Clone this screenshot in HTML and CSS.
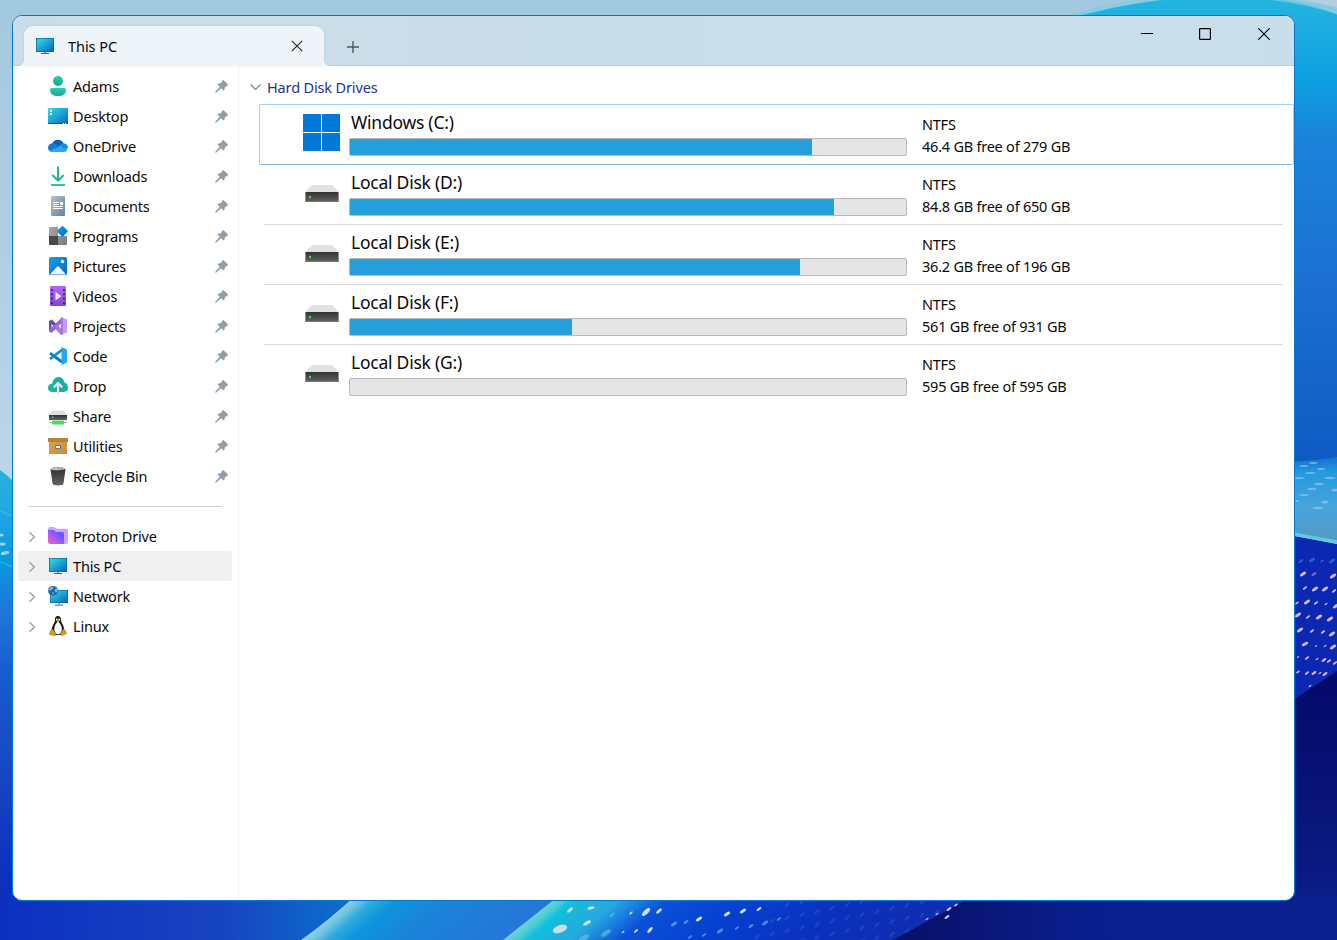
FILE: index.html
```html
<!DOCTYPE html>
<html lang="en">
<head>
<meta charset="utf-8">
<title>This PC</title>
<link rel="stylesheet" href="styles.css">
</head>
<body>
<svg class="wallpaper" viewBox="0 0 1337 940" aria-hidden="true">
  <defs>
    <linearGradient id="sky" x1="0" y1="0" x2="0" y2="1"><stop offset="0" stop-color="#a2c8df"/><stop offset=".5" stop-color="#bad6e8"/></linearGradient>
    <linearGradient id="leftWave" gradientUnits="userSpaceOnUse" x1="0" y1="468" x2="0" y2="940"><stop offset="0" stop-color="#25b4df"/><stop offset=".09" stop-color="#24a6e4"/><stop offset=".19" stop-color="#079be0"/><stop offset=".3" stop-color="#1e78da"/><stop offset=".43" stop-color="#165dd0"/><stop offset=".65" stop-color="#1647c3"/><stop offset=".85" stop-color="#0b32bf"/><stop offset="1" stop-color="#0b2fbd"/></linearGradient>
    <linearGradient id="rightArc" gradientUnits="userSpaceOnUse" x1="0" y1="0" x2="0" y2="460"><stop offset="0" stop-color="#24b4df"/><stop offset=".17" stop-color="#0ea1e2"/><stop offset=".3" stop-color="#1b83da"/><stop offset=".65" stop-color="#1b6ed1"/><stop offset="1" stop-color="#0d5bc3"/></linearGradient>
    <linearGradient id="rightWave" x1="0" y1="0" x2="0" y2="1"><stop offset="0" stop-color="#166ed2"/><stop offset=".18" stop-color="#239be0"/><stop offset=".6" stop-color="#49a4db"/><stop offset="1" stop-color="#5399c5"/></linearGradient>
    <linearGradient id="bottomLeft" gradientUnits="userSpaceOnUse" x1="0" y1="0" x2="350" y2="0"><stop offset="0" stop-color="#0b30c0"/><stop offset=".65" stop-color="#1745c1"/><stop offset="1" stop-color="#0a70cc"/></linearGradient>
    <linearGradient id="bottomMid" gradientUnits="userSpaceOnUse" x1="325" y1="920" x2="410" y2="1019"><stop offset="0" stop-color="#8ed2e3"/><stop offset=".06" stop-color="#6fc5e0"/><stop offset=".13" stop-color="#2eabdc"/><stop offset=".24" stop-color="#0d95dd"/><stop offset=".5" stop-color="#1b83da"/><stop offset="1" stop-color="#2477d7"/></linearGradient>
    <linearGradient id="bottomDots" gradientUnits="userSpaceOnUse" x1="528" y1="920" x2="697" y2="1118"><stop offset="0" stop-color="#6fd0d8"/><stop offset=".03" stop-color="#45cfd6"/><stop offset=".055" stop-color="#12c0dc"/><stop offset=".17" stop-color="#26a6e0"/><stop offset=".29" stop-color="#0b50d8"/><stop offset=".5" stop-color="#063fd0"/><stop offset=".75" stop-color="#0a31bd"/><stop offset="1" stop-color="#102cb2"/></linearGradient>
    <linearGradient id="bottomDark" gradientUnits="userSpaceOnUse" x1="920" y1="0" x2="1337" y2="0"><stop offset="0" stop-color="#08116d"/><stop offset=".4" stop-color="#0a1f8d"/><stop offset="1" stop-color="#0b208f"/></linearGradient>
    <linearGradient id="rightDark" gradientUnits="userSpaceOnUse" x1="0" y1="680" x2="0" y2="940"><stop offset="0" stop-color="#05096a"/><stop offset=".5" stop-color="#081578"/><stop offset="1" stop-color="#0b208f"/></linearGradient>
    <ellipse id="d" rx="3.6" ry="1.5"/>
    <pattern id="faint" width="15" height="13" patternUnits="userSpaceOnUse" patternTransform="skewY(-12)"><ellipse cx="7" cy="6" rx="3" ry="1.200" fill="#3f8be0" opacity=".25" transform="rotate(-38 7 6)"/></pattern>
  </defs>
  <path fill="url(#sky)" d="M0 0h1337v940H0z"/>
  <path fill="url(#leftWave)" d="M0 470q7 5 14 12v458H0z"/>
  <path d="M0 511q7 3 14 6M0 562q7 2 14 6" fill="none" stroke="#48c7dc" stroke-width="1.5" opacity=".5"/>
  <g fill="#b9e4ee" opacity=".8"><use href="#d" x="0" y="535"/><use href="#d" x="2" y="544"/><use href="#d" transform="translate(5 553)rotate(-12)scale(1.200)"/></g>
  <path fill="url(#rightArc)" d="M1060 20Q1150-4 1220-5Q1290-5 1337 14V480H1290V30z"/>
  <path d="M1058 20Q1130-2 1200-5" fill="none" stroke="#7ecfdd" stroke-width="4" opacity=".75"/>
  <path d="M1262-4Q1305 0 1342 13" fill="none" stroke="#7ecfdd" stroke-width="6" opacity=".7"/>
  <path fill="#b4cfe0" d="M1285-1Q1315 1 1338 8V-1z"/>
  <path fill="url(#rightWave)" d="M1290 462q24-1 47-5v86l-47-9z"/>
  <path fill="#0c27b1" d="M1290 535l47 9v146l-47 20z"/>
  <path d="M1290 533.500l47 8.500" stroke="#5ccbdd" stroke-width="3.500"/>
  <path fill="url(#rightDark)" d="M1290 702l47-31v269h-47z"/>
  <path fill="url(#bottomLeft)" d="M0 895h380v45H0z"/>
  <path fill="url(#bottomMid)" d="M356 895q-28 26-55 45h270v-45z"/>
  <path fill="url(#bottomDots)" d="M560 895l-57 45h420l60-45z"/>
  <path fill="url(#faint)" d="M780 901h175l-60 39H750z"/>
  <path fill="url(#bottomDark)" d="M975 895l-82 45h444v-45z"/>
  <g fill="#9dc8e8" opacity=".65">
    <use href="#d" transform="translate(1304 466)scale(1.200 .7)"/><use href="#d" transform="translate(1313 463)scale(1.200 .6)"/><use href="#d" transform="translate(1310 473)scale(1.400 .7)"/><use href="#d" transform="translate(1299 478)scale(1.500 .7)"/><use href="#d" transform="translate(1321 469)scale(1.200 .7)"/><use href="#d" transform="translate(1330 478)scale(1.700 .8)"/><use href="#d" transform="translate(1319 484)scale(1.300 .8)"/><use href="#d" transform="translate(1312 489)scale(1.200 .8)"/><use href="#d" transform="translate(1304 495)scale(1.300 .7)"/><use href="#d" x="1335" y="490"/><use href="#d" x="1325" y="502"/><use href="#d" transform="translate(1318 508)scale(1.400 .8)"/><use href="#d" transform="translate(1297 501)scale(.6)"/>
  </g>
  <g fill="#d5b5d8">
    <use href="#d" transform="translate(1303 574)rotate(-35)"/><use href="#d" opacity=".5" transform="translate(1314 574)rotate(-35)scale(.8)"/><use href="#d" transform="translate(1333 576)rotate(-35)"/>
    <use href="#d" transform="translate(1305 588)rotate(-35)scale(.7)"/><use href="#d" transform="translate(1315 589)rotate(-35)"/><use href="#d" transform="translate(1325 589)rotate(-35)"/><use href="#d" transform="translate(1334 591)rotate(-35)scale(.7)"/>
    <use href="#d" transform="translate(1297 603)rotate(-35)scale(.6)"/><use href="#d" transform="translate(1307 602)rotate(-35)"/><use href="#d" transform="translate(1316 603)rotate(-35)scale(.7)"/><use href="#d" transform="translate(1326 604)rotate(-35)scale(.5)"/><use href="#d" transform="translate(1336 606)rotate(-35)"/>
    <use href="#d" transform="translate(1298 615)rotate(-35)"/><use href="#d" transform="translate(1308 617)rotate(-35)scale(.7)"/><use href="#d" transform="translate(1319 617)rotate(-35)"/><use href="#d" transform="translate(1330 619)rotate(-35)"/>
    <use href="#d" transform="translate(1300 630)rotate(-35)"/><use href="#d" transform="translate(1312 631)rotate(-35)scale(.7)"/><use href="#d" transform="translate(1323 632)rotate(-35)scale(.7)"/><use href="#d" transform="translate(1332 634)rotate(-35)"/>
    <use href="#d" transform="translate(1305 644)rotate(-30)"/><use href="#d" transform="translate(1316 646)rotate(-35)scale(.4)"/><use href="#d" transform="translate(1325 646)rotate(-35)scale(.5)"/><use href="#d" transform="translate(1333 647)rotate(-35)"/>
    <use href="#d" transform="translate(1298 657)rotate(-35)scale(.4)"/><use href="#d" transform="translate(1307 658)rotate(-35)scale(.7)"/><use href="#d" transform="translate(1317 659)rotate(-35)scale(.5)"/><use href="#d" transform="translate(1324 660)rotate(-35)scale(.8)"/><use href="#d" transform="translate(1329 661)rotate(-35)scale(.7)"/><use href="#d" transform="translate(1335 663)rotate(-35)scale(.7)"/>
    <use href="#d" transform="translate(1298 672)rotate(-35)scale(.6)"/><use href="#d" transform="translate(1307 673)rotate(-35)scale(.7)"/><use href="#d" transform="translate(1314 673)rotate(-35)scale(.8)"/><use href="#d" transform="translate(1320 673)rotate(-35)scale(.5)"/><use href="#d" transform="translate(1325 674)rotate(-35)scale(.8)"/><use href="#d" transform="translate(1310 686)rotate(-35)scale(.5)"/>
  </g>
  <g fill="#2e78d0" opacity=".7"><use href="#d" transform="translate(1301 561)rotate(-35)scale(.8)"/><use href="#d" transform="translate(1312 560)rotate(-35)"/><use href="#d" transform="translate(1322 561)rotate(-35)scale(.6)"/><use href="#d" transform="translate(1332 561)rotate(-35)"/></g>
  <g fill="#c5e0e6">
    <ellipse cx="560" cy="929" rx="7.500" ry="3.800" transform="rotate(-20 560 929)"/><ellipse cx="555" cy="946" rx="6" ry="3"/><use href="#d" transform="translate(570 910)rotate(-45)"/><use href="#d" transform="translate(587 923)rotate(-30)scale(1.200)"/><use href="#d" transform="translate(591 908)rotate(-10)"/>
    <use href="#d" transform="translate(646 912)rotate(-45)scale(1.500)"/><use href="#d" transform="translate(659 911)rotate(-45)"/><use href="#d" transform="translate(631 913)rotate(-40)scale(.6)"/><use href="#d" transform="translate(650 930)rotate(-50)"/><use href="#d" transform="translate(636 931)rotate(-40)scale(.7)"/><use href="#d" transform="translate(623 932)rotate(-40)scale(.5)"/>
    <use href="#d" transform="translate(699 919)rotate(-35)"/><use href="#d" transform="translate(727 914)rotate(-35)"/><use href="#d" transform="translate(743 911)rotate(-35)"/><use href="#d" transform="translate(759 909)rotate(-35)scale(.8)"/>
  </g>
  <g fill="#5fc3e4" opacity=".65">
    <use href="#d" transform="translate(584 938)rotate(-30)scale(1.700)"/><use href="#d" transform="translate(606 933)rotate(-35)scale(1.600)"/><use href="#d" transform="translate(612 915)rotate(-40)scale(.8)"/><use href="#d" transform="translate(674 924)rotate(-35)"/><use href="#d" transform="translate(686 922)rotate(-35)scale(.8)"/><use href="#d" transform="translate(720 931)rotate(-35)"/><use href="#d" transform="translate(704 935)rotate(-35)scale(.7)"/><use href="#d" transform="translate(690 937)rotate(-35)scale(.7)"/><use href="#d" transform="translate(737 928)rotate(-35)scale(.7)"/><use href="#d" transform="translate(751 926)rotate(-35)scale(.8)"/><use href="#d" transform="translate(765 923)rotate(-35)"/><use href="#d" transform="translate(779 919)rotate(-35)scale(.7)"/>
  </g>
  <g fill="#c9c6ee"><use href="#d" transform="translate(949 909)rotate(-35)scale(.8)"/><use href="#d" transform="translate(956 905)rotate(-35)scale(.6)"/><use href="#d" transform="translate(947 917)rotate(-35)scale(.8)"/><use href="#d" transform="translate(937 914)rotate(-35)scale(.5)"/><use href="#d" transform="translate(927 919)rotate(-35)scale(.5)"/></g>
</svg>

<svg class="sprite" aria-hidden="true">
  <defs>
    <linearGradient id="gGreen" x1="0" y1="0" x2="0" y2="1"><stop offset="0" stop-color="#2bcdb3"/><stop offset="1" stop-color="#12a893"/></linearGradient>
    <linearGradient id="gScreen" x1="0" y1="0" x2="1" y2="1"><stop offset="0" stop-color="#33dce4"/><stop offset=".5" stop-color="#1ba3d6"/><stop offset="1" stop-color="#0d63bd"/></linearGradient>
    <linearGradient id="gBlue" x1="0" y1="0" x2="1" y2="1"><stop offset="0" stop-color="#15a0ea"/><stop offset="1" stop-color="#0868bd"/></linearGradient>
    <linearGradient id="gDoc" x1="0" y1="0" x2="1" y2="1"><stop offset="0" stop-color="#afc3d6"/><stop offset="1" stop-color="#66809b"/></linearGradient>
    <linearGradient id="gVid" x1="0" y1="0" x2="0" y2="1"><stop offset="0" stop-color="#b567f1"/><stop offset="1" stop-color="#8443dd"/></linearGradient>
    <linearGradient id="gGrey" x1="0" y1="0" x2="1" y2="1"><stop offset="0" stop-color="#a7a7a9"/><stop offset="1" stop-color="#7b7b7e"/></linearGradient>
    <linearGradient id="gDark" x1="0" y1="0" x2="0" y2="1"><stop offset="0" stop-color="#343434"/><stop offset="1" stop-color="#626262"/></linearGradient>
    <linearGradient id="gFolder" x1="1" y1="0" x2="0" y2="1"><stop offset=".3" stop-color="#7055ff"/><stop offset=".6" stop-color="#a75bf2"/><stop offset="1" stop-color="#ff62c0"/></linearGradient>
    <linearGradient id="gBox" x1="0" y1="0" x2="1" y2="1"><stop offset="0" stop-color="#d6a254"/><stop offset="1" stop-color="#c58e40"/></linearGradient>
  </defs>
  <symbol id="user" viewBox="0 0 20 20"><circle cx="10" cy="5" r="5" fill="url(#gGreen)"/><path fill="url(#gGreen)" d="M4 12h12q2 0 2 2c0 4-3.500 6-8 6s-8-2-8-6q0-2 2-2z"/></symbol>
  <symbol id="desktop" viewBox="0 0 20 20"><rect y="2" width="20" height="16" rx="1" fill="url(#gScreen)"/><path fill="#07599c" d="M0 17h20q0 1-1 1H1q-1 0-1-1z"/><path fill="#fff" d="M2 4h2v2H2zM2 7h2v2H2zM15 17h1v1h-1zM17 17h1v1h-1z"/></symbol>
  <symbol id="onedrive" viewBox="0 0 20 20"><path fill="#0862b8" d="M4 8a6.200 6.200 0 0 1 11.500-.5L9 12z"/><path fill="#0f7bd8" d="M4.500 7.200C1.500 7.500 0 9.500 0 11.800S2 16 4 16l8-5-5-3.200q-1-.6-2.500-.6z"/><path fill="#1688e0" d="M15.500 7.200c2.800.3 4.500 2 4.500 4.600l-3 3-5-4q1-3.500 3.500-3.600z"/><path fill="#2ba7ef" d="M1.800 14.800L12 10.200l7.400 3.600Q18.500 16 16 16H4.500Q2.800 16 1.800 14.800z"/></symbol>
  <symbol id="download" viewBox="0 0 20 20"><g fill="none" stroke="#1fb597" stroke-width="2"><path d="M10 .5v14M4.300 9l5.700 5.500L15.700 9"/><path stroke="#35c39a" stroke-width="1.800" d="M3 19h14"/></g></symbol>
  <symbol id="document" viewBox="0 0 20 20"><rect x="3" width="14" height="20" rx="1" fill="url(#gDoc)"/><path fill="#fff" d="M5 6h6v1H5zM12 6h3v3h-3zM5 8h6v1H5zM5 10h10v1H5zM5 12h10v1H5z"/></symbol>
  <symbol id="programs" viewBox="0 0 20 20"><path fill="url(#gGrey)" d="M1 2q0-1 1-1h8v9H1zM10 10h9v8q0 1-1 1h-8z"/><path fill="#47484b" d="M1 10h9v9H2q-1 0-1-1z"/><path fill="url(#gBlue)" d="M14.500 0q.7 0 1 .4l4 4.200q.5.600 0 1.200l-4.200 4.400q-.8.700-1.600 0L9.300 5.800q-.4-.6 0-1.200L13.500.4q.4-.4 1-.4z"/></symbol>
  <symbol id="picture" viewBox="0 0 20 20"><rect x="1" y="1" width="18" height="18" rx="1.500" fill="url(#gBlue)"/><path fill="#eef7ff" d="M2 18.500l7-7.700q1-.9 2 0l7 7.700z"/><circle cx="14.500" cy="5.500" r="1.700" fill="#fff"/></symbol>
  <symbol id="video" viewBox="0 0 20 20"><rect x="2" width="16" height="20" rx="1" fill="url(#gVid)"/><path fill="none" stroke="#482079" stroke-width="1.800" stroke-dasharray="2 2.300" d="M4 3v16M16 3v16"/><path fill="#f0e6fc" d="M7.500 6v8.500L13.500 10.200z"/></symbol>
  <symbol id="vs" viewBox="0 0 20 20"><path fill="#6c4aaa" d="M1 5l2.500-1.500L6 5.500 14 14l-1.500 2L5 9.500 3.500 8v5L1 15.500z"/><path fill="#9067d2" d="M1 15.500L3.500 17 14 7.500V1.500L7 8l-5 5z"/><path fill="#c79af5" d="M13 1l6 2.500v13L13 19z"/><path fill="#ad73e4" d="M13 1l2 1v16l-2 1L6.500 12l2-3 4.500 4.500z"/><path fill="#e9d9f9" d="M13 7.500v5L10 10z"/></symbol>
  <symbol id="code" viewBox="0 0 20 20"><path fill="none" stroke="#087abd" stroke-width="2.800" stroke-linejoin="round" d="M2 7.200L14 16"/><path fill="none" stroke="#0a90d5" stroke-width="2.800" d="M2 13L14.500 3.500"/><path fill="#22a6ed" d="M13.500 1l5 2.200q.5.300.5 1v11.600q0 .8-.5 1L13.500 19z"/></symbol>
  <symbol id="drop" viewBox="0 0 20 20"><path fill="#16b39f" d="M4.500 16q-4.500-.3-4.500-4 0-3.700 4-4.200Q5.500 1 10.500 1q4.500 0 6 5.500Q20 7.500 20 11.500q0 4.200-4.200 4.500z"/><path fill="#e2e2e7" d="M10 5.500l5 5-1.500 1.700-2.400-2.200v8.500H8.900V10l-2.400 2.200L5 10.500z"/></symbol>
  <symbol id="share" viewBox="0 0 20 20"><path fill="#dedfe3" d="M4 4.500h12l3 4.500H1z"/><path fill="url(#gDark)" d="M1 9h18v5H1z"/><path fill="#3be35a" d="M4 10.500h1.500V12H4z"/><path fill="#4bdc62" d="M4 14.500h12v4H4z"/><path fill="#b5b8b7" d="M1 16h3v1H1zM16 16h3v1h-3z"/></symbol>
  <symbol id="box" viewBox="0 0 20 20"><path fill="url(#gBox)" d="M1 5h18v13H1z"/><path fill="#bd8131" d="M0 2h20v4H0z"/><path fill="#fff" stroke="#6f7482" d="M7.500 9.500h5v3h-5z"/></symbol>
  <symbol id="bin" viewBox="0 0 20 20"><path fill="url(#gDark)" d="M2.500 3h15l-2 14.500q-.3 1.300-1.600 1.500-3.900.8-7.800 0-1.300-.2-1.600-1.500z"/><path fill="#c3c6c7" d="M3 2l4-1.500 4 .5 5 .2 1.500 1.800q-7 2.500-15 .4z"/><path fill="#6e8984" d="M5 1.500l2 .8-1 1zM10 1l2 1.500h-3z"/><path fill="#b96b66" d="M12.500 1.800h1.500v1.500h-1.500z"/></symbol>
  <symbol id="folder" viewBox="0 0 20 20"><path fill="#c9a4ff" d="M0 3q0-2 2-2h4l2.500 1.800H18q2 0 2 2V16q0 2-2 2H2z"/><path fill="url(#gFolder)" d="M0 4h5.500L8 6h6.500q1.500 0 1.500 1.500V18H2q-2 0-2-2z"/></symbol>
  <symbol id="pc" viewBox="0 0 20 20"><path fill="#0a6b94" d="M1 2h18v14H1z"/><path fill="url(#gScreen)" d="M1.700 2.700h16.600v12.600H1.700z"/><path fill="#9aa3aa" d="M9 16h2v1.200H9z"/><path fill="#53626e" d="M6 17h8v1H6z"/></symbol>
  <symbol id="network" viewBox="0 0 20 20"><path fill="#0a6b94" d="M2 4h18v13H2z"/><path fill="url(#gScreen)" d="M2.700 4.700h16.600v11.600H2.700z"/><path fill="#9aa3aa" d="M10 17h2v1.500h-2z"/><path fill="#53626e" d="M7 18.700h8v1H7z"/><circle cx="5" cy="4.800" r="4.900" fill="#1b67af"/><path fill="#7fbde5" d="M3 1l2.500-.6L4.500 3l-2 1.500L.6 4zM6.500 4l2-2 1 3-1.500 2zM4 6l2 1-1 2z"/></symbol>
  <symbol id="tux" viewBox="0 0 20 20"><path fill="#1b1b1b" d="M10 0c-2.200 0-3.200 1.500-3 4 .1 2-.8 2.800-2 5-1.500 3-2.300 8 1 10h8c3-2 2.300-7 1-10-1-2-2-3-2-5 0-2.500-1-4-3-4z"/><path fill="#fff" d="M10 5.500C8 7 6.300 10 6.300 13c0 3 1.700 5.300 3.700 5.300s3.900-2.300 3.900-5.300c0-3-1.900-6-3.900-7.500z"/><circle cx="8.700" cy="3.400" r=".9" fill="#fff"/><circle cx="11.300" cy="3.400" r=".9" fill="#fff"/><path fill="#e2ab20" d="M8 4.800l2-1 2 1-2 1.600z"/><path fill="#d79c18" stroke="#9e7213" stroke-width=".5" d="M4.300 13l3.500 4.500q.5 2-1.500 2.300L1.500 18.500l.5-3zM15.700 13l-3.200 4.500q-.4 2 1.500 2.300l4.500-2.300-1-3z"/></symbol>
  <symbol id="pin" viewBox="0 0 14 14"><path fill="#929ea7" stroke="#929ea7" stroke-width=".5" d="M8.300.5q.6-.4 1.100 0l4.200 4.200q.5.600-.1 1.100l-2.700 1.500-1 3.200q-.3.700-.9.200L6.600 8.500 1.800 13 .5 13.500 1 12.100 5.400 7.300 3.200 5.200q-.5-.6.200-.9l3.300-1z"/></symbol>
  <symbol id="chev" viewBox="0 0 10 12"><path fill="none" stroke="#a4a4a4" stroke-width="1.500" d="M2.500 2.300L7.300 7 2.500 11.700"/></symbol>
  <symbol id="disk" viewBox="0 0 34 18"><path fill="#e1e1e5" d="M7 0h20l7 7H0z"/><path fill="url(#gDark)" d="M0 7h34v10H0z"/><path fill="#8e9091" d="M0 7h1v10H0zM33 7h1v10h-1zM0 16.500h34v.5H0z"/><circle cx="5" cy="12" r="1.200" fill="#32eb3a"/></symbol>
</svg>

<main class="window">
  <header class="titlebar">
    <div class="tab">
      <svg class="ico"><use href="#pc"/></svg>
      <span class="tab-title">This PC</span>
      <svg class="tab-close" viewBox="0 0 12 12"><path d="M.8.800l10.400 10.400M11.200.800L.8 11.200"/></svg>
    </div>
    <svg class="new-tab" viewBox="0 0 12 12"><path d="M6 0v12M0 6h12"/></svg>
    <div class="controls">
      <svg viewBox="0 0 12 12"><path d="M0 5.500h12"/></svg>
      <svg viewBox="0 0 12 12"><rect x=".6" y=".6" width="10.800" height="10.800" rx=".6"/></svg>
      <svg viewBox="0 0 12 12"><path d="M.3.300l11.400 11.400M11.700.300L.3 11.700"/></svg>
    </div>
  </header>
  <div class="body">
    <nav class="sidebar">
      <div class="item"><svg class="ico"><use href="#user"/></svg><span>Adams</span><svg class="pin"><use href="#pin"/></svg></div>
      <div class="item"><svg class="ico"><use href="#desktop"/></svg><span>Desktop</span><svg class="pin"><use href="#pin"/></svg></div>
      <div class="item"><svg class="ico"><use href="#onedrive"/></svg><span>OneDrive</span><svg class="pin"><use href="#pin"/></svg></div>
      <div class="item"><svg class="ico"><use href="#download"/></svg><span>Downloads</span><svg class="pin"><use href="#pin"/></svg></div>
      <div class="item"><svg class="ico"><use href="#document"/></svg><span>Documents</span><svg class="pin"><use href="#pin"/></svg></div>
      <div class="item"><svg class="ico"><use href="#programs"/></svg><span>Programs</span><svg class="pin"><use href="#pin"/></svg></div>
      <div class="item"><svg class="ico"><use href="#picture"/></svg><span>Pictures</span><svg class="pin"><use href="#pin"/></svg></div>
      <div class="item"><svg class="ico"><use href="#video"/></svg><span>Videos</span><svg class="pin"><use href="#pin"/></svg></div>
      <div class="item"><svg class="ico"><use href="#vs"/></svg><span>Projects</span><svg class="pin"><use href="#pin"/></svg></div>
      <div class="item"><svg class="ico"><use href="#code"/></svg><span>Code</span><svg class="pin"><use href="#pin"/></svg></div>
      <div class="item"><svg class="ico"><use href="#drop"/></svg><span>Drop</span><svg class="pin"><use href="#pin"/></svg></div>
      <div class="item"><svg class="ico"><use href="#share"/></svg><span>Share</span><svg class="pin"><use href="#pin"/></svg></div>
      <div class="item"><svg class="ico"><use href="#box"/></svg><span>Utilities</span><svg class="pin"><use href="#pin"/></svg></div>
      <div class="item"><svg class="ico"><use href="#bin"/></svg><span>Recycle Bin</span><svg class="pin"><use href="#pin"/></svg></div>
      <div class="divider"></div>
      <div class="item node"><svg class="chev"><use href="#chev"/></svg><svg class="ico"><use href="#folder"/></svg><span>Proton Drive</span></div>
      <div class="item node selected"><svg class="chev"><use href="#chev"/></svg><svg class="ico"><use href="#pc"/></svg><span>This PC</span></div>
      <div class="item node"><svg class="chev"><use href="#chev"/></svg><svg class="ico"><use href="#network"/></svg><span>Network</span></div>
      <div class="item node"><svg class="chev"><use href="#chev"/></svg><svg class="ico"><use href="#tux"/></svg><span>Linux</span></div>
    </nav>
    <section class="content">
      <h1 class="group"><svg viewBox="0 0 12 8"><path d="M1.500 1.500l5 5 5-5"/></svg>Hard Disk Drives</h1>
      <div class="drive focused">
        <svg class="win-logo" viewBox="0 0 37 37"><path fill="#0078d7" d="M0 0h18v18H0zM19 0h18v18H19zM0 19h18v18H0zM19 19h18v18H19z"/></svg>
        <div class="usage"><div class="name">Windows (C:)</div><div class="bar"><div class="fill" style="width:83.100%"></div></div></div>
        <div class="info"><div>NTFS</div><div>46.4 GB free of 279 GB</div></div>
      </div>
      <div class="drive">
        <svg class="disk"><use href="#disk"/></svg>
        <div class="usage"><div class="name">Local Disk (D:)</div><div class="bar"><div class="fill" style="width:87.100%"></div></div></div>
        <div class="info"><div>NTFS</div><div>84.8 GB free of 650 GB</div></div>
      </div>
      <div class="drive">
        <svg class="disk"><use href="#disk"/></svg>
        <div class="usage"><div class="name">Local Disk (E:)</div><div class="bar"><div class="fill" style="width:80.900%"></div></div></div>
        <div class="info"><div>NTFS</div><div>36.2 GB free of 196 GB</div></div>
      </div>
      <div class="drive">
        <svg class="disk"><use href="#disk"/></svg>
        <div class="usage"><div class="name">Local Disk (F:)</div><div class="bar"><div class="fill" style="width:39.900%"></div></div></div>
        <div class="info"><div>NTFS</div><div>561 GB free of 931 GB</div></div>
      </div>
      <div class="drive">
        <svg class="disk"><use href="#disk"/></svg>
        <div class="usage"><div class="name">Local Disk (G:)</div><div class="bar"></div></div>
        <div class="info"><div>NTFS</div><div>595 GB free of 595 GB</div></div>
      </div>
    </section>
  </div>
</main>
</body>
</html>
```
FILE: styles.css
```css
* { box-sizing: border-box; }
html, body { margin: 0; width: 1337px; height: 940px; overflow: hidden; }
body { padding: 15px 42px 39px 12px; font-family: "Noto Sans", "Open Sans", sans-serif; font-size: 14.500px; color: #0a0a0a; }
svg { display: block; flex: none; }
.wallpaper { position: absolute; inset: 0; width: 1337px; height: 940px; z-index: -1; }
.sprite { position: absolute; width: 0; height: 0; }

.window { width: 1283px; height: 886px; border: 1px solid #0078d4; border-radius: 10px; overflow: hidden; background: #fff; display: flex; flex-direction: column; }
.titlebar { height: 50px; flex: none; display: flex; align-items: flex-end; padding-left: 11px; background: linear-gradient(90deg, #cbdde9, #c8dfeb); box-shadow: inset 0 -1px #b9ccd8; }
.tab { position: relative; width: 300px; height: 40px; padding: 0 21px 0 11px; display: flex; align-items: center; background: #eff4f9; border-radius: 9px 9px 0 0; box-shadow: 0 0 2px #8ea7b966; }
.tab::before, .tab::after { content: ""; position: absolute; bottom: 0; width: 5px; height: 5px; }
.tab::before { left: -5px; background: radial-gradient(circle at 0 0, transparent 4.500px, #eff4f9 5px); }
.tab::after { right: -5px; background: radial-gradient(circle at 100% 0, transparent 4.500px, #eff4f9 5px); }
.tab-title { margin-left: 13px; flex: 1; letter-spacing: -.050px; }
.ico { width: 20px; height: 20px; overflow: visible; }
.tab-close { width: 12px; height: 12px; fill: none; stroke: #222; stroke-width: 1.100; }
.new-tab { width: 12px; height: 12px; margin: 0 0 13px 23px; fill: none; stroke: #555; stroke-width: 1.400; }
.controls { display: flex; gap: 46px; margin: 0 24px 26px auto; }
.controls svg { width: 12px; height: 12px; fill: none; stroke: #000; stroke-width: 1.200; }
.controls svg:last-child { margin-left: 1px; }

.body { flex: 1; display: flex; min-height: 0; }
.sidebar { width: 226px; flex: none; padding: 5px 6px 0 5px; border-right: 1px solid #f3f3f3; }
.item { height: 30px; display: flex; align-items: center; padding: 0 4px 0 30px; border-radius: 2px; }
.item span { margin-left: 5px; flex: 1; white-space: nowrap; letter-spacing: -.180px; }
.pin { width: 13px; height: 13px; }
.node { padding-left: 9px; }
.chev { width: 10px; height: 12px; margin-right: 11px; }
.selected { background: #f0f0f0; }
.divider { height: 1px; margin: 15px 10px 14px; background: #d2d2d2; }

.content { flex: 1; padding: 11px 0 0 10px; }
.group { display: flex; align-items: center; gap: 6px; height: 20px; margin: 0 0 7px; font-size: 14.500px; font-weight: 400; letter-spacing: -.150px; color: #263484; }
.group svg { width: 12px; height: 8px; fill: none; stroke: #7d7d7d; stroke-width: 1.100; }
.drive { height: 60px; margin: 0 11px 0 15px; padding-left: 41px; display: flex; border-bottom: 1px solid #dadada; }
.drive:last-child { border-bottom: 0; }
.focused { height: 61px; margin: 0 0 0 10px; padding: 0 0 0 43px; border: 1px solid #99d1ff; border-bottom-color: #84bce9; border-radius: 2px; }
.win-logo { width: 37px; height: 37px; margin: 9px 9px 0 0; }
.disk { width: 34px; height: 18px; margin: 20px 10px 0 0; }
.usage { width: 558px; flex: none; }
.name { height: 33px; padding: 3px 0 0 2px; font-size: 17.500px; line-height: 28px; letter-spacing: -.240px; }
.bar { height: 18px; border: 1px solid #b9b9b9; border-radius: 2px; background: #e5e5e5; }
.fill { height: 16px; background: #26a0da; }
.info { padding: 8px 0 0 15px; line-height: 22px; letter-spacing: -.230px; }
```
